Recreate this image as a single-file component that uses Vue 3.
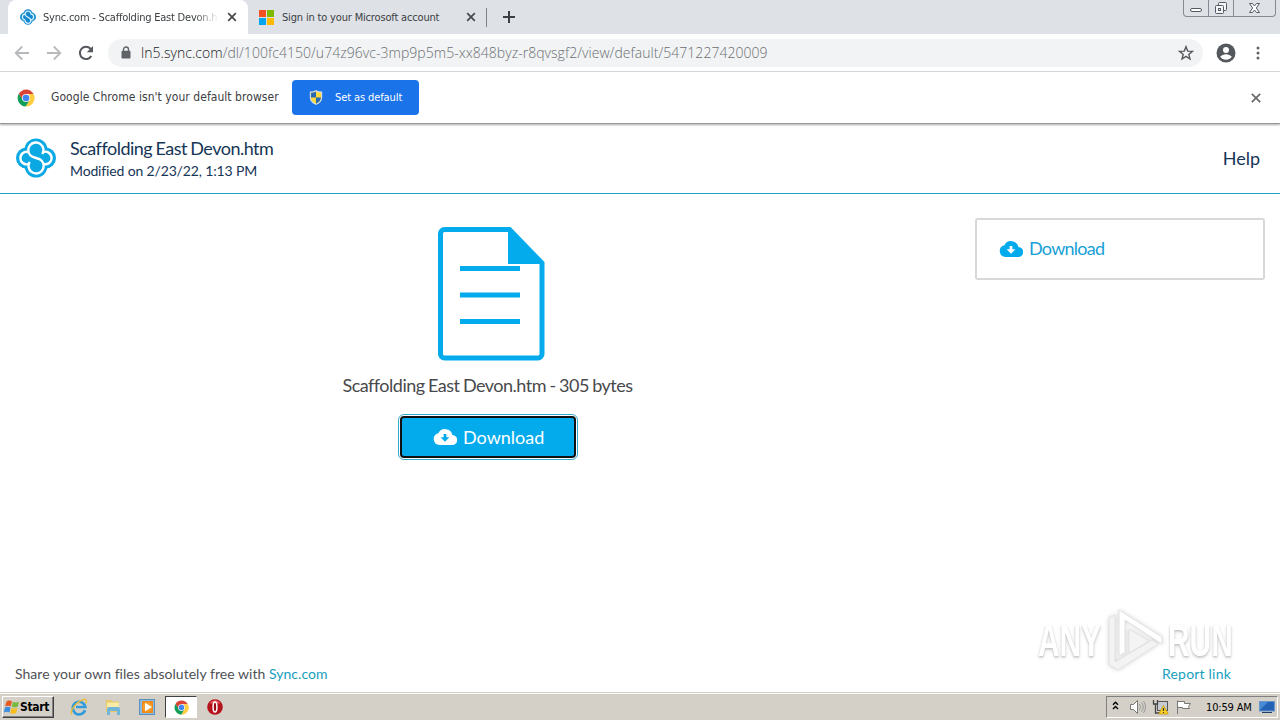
<template>
  <div class="screen">
    <header class="tab-strip">
      <div class="tab active">
        <svg class="favicon" viewBox="0 0 40 40">
          <g fill="#1689cf">
            <circle cx="20" cy="11.5" r="11" />
            <circle cx="20" cy="28.5" r="11" />
            <circle cx="11" cy="20" r="11" />
            <circle cx="29" cy="20" r="11" />
          </g>
          <g fill="none" stroke="#d9f2ff" stroke-width="3">
            <path d="M27 13a7 7 0 1 0-11 5l8 5a7 7 0 1 1-11 5" />
            <path d="M13 13a7 7 0 1 0 0 14" />
            <path d="M27 13a7 7 0 1 1 0 14" />
          </g>
        </svg>
        <span class="tab-title first">Sync.com - Scaffolding East Devon.h</span>
        <svg class="close" viewBox="0 0 10 10"><path d="M1.2 1.2l7.6 7.6M8.8 1.2L1.2 8.8" /></svg>
      </div>
      <div class="tab">
        <svg class="favicon ms" viewBox="0 0 16 16">
          <path fill="#f25022" d="M0 0h7.5v7.5H0z" />
          <path fill="#7fba00" d="M8.5 0H16v7.5H8.5z" />
          <path fill="#00a4ef" d="M0 8.5h7.5V16H0z" />
          <path fill="#ffb900" d="M8.5 8.5H16V16H8.5z" />
        </svg>
        <span class="tab-title second">Sign in to your Microsoft account</span>
        <svg class="close" viewBox="0 0 10 10"><path d="M1.2 1.2l7.6 7.6M8.8 1.2L1.2 8.8" /></svg>
      </div>
      <span class="tab-divider"></span>
      <svg class="new-tab" viewBox="0 0 12 12"><path d="M6 0v12M0 6h12" /></svg>
      <div class="window-buttons">
        <span><svg width="14" height="15"><rect x="1.5" y="8.5" width="11" height="3" rx="1.5" fill="#fff" stroke="#555b66" /></svg></span>
        <span>
          <svg width="14" height="15" fill="#f4f5f7" stroke="#555b66">
            <rect x="4.5" y="2.5" width="8" height="8" rx="1" />
            <rect x="1.5" y="5.5" width="8" height="8" rx="1" />
            <rect x="4.5" y="8.5" width="2" height="2" />
          </svg>
        </span>
        <span class="wide">
          <svg width="13" height="15"><path d="M1.5 3.5h3l2 2.5 2-2.5h3L8.3 8l3.2 4.5h-3l-2-2.5-2 2.5h-3L4.7 8z" fill="#fff" stroke="#555b66" /></svg>
        </span>
      </div>
    </header>

    <div class="toolbar">
      <svg class="nav" viewBox="0 0 16 16"><path d="M15 8H2M8.2 1.5L1.7 8l6.5 6.5" /></svg>
      <svg class="nav" viewBox="0 0 16 16"><path d="M1 8h13M7.8 1.5L14.3 8l-6.5 6.5" /></svg>
      <svg class="nav reload" viewBox="0 0 16 16">
        <path d="M13.3 11A6.1 6.1 0 1 1 12.5 3.8L14 5.5" />
        <path d="M15 1v6.2H8.8z" class="solid" />
      </svg>
      <div class="address">
        <svg class="lock" viewBox="0 0 10 13">
          <path d="M2.5 6V3.5a2.5 2.5 0 0 1 5 0V6" fill="none" stroke="#5f6368" stroke-width="1.4" />
          <rect x=".5" y="4.8" width="9" height="7.7" rx="1" fill="#5f6368" />
        </svg>
        <span class="url"><b>ln5.sync.com</b>/dl/100fc4150/u74z96vc-3mp9p5m5-xx848byz-r8qvsgf2/view/default/5471227420009</span>
        <svg class="star" viewBox="0 0 16 16"><path d="M8 1.7l1.7 4.4 4.7.3-3.6 3 1.2 4.6L8 11.4 4 14l1.2-4.6-3.6-3 4.7-.3z" /></svg>
      </div>
      <svg class="avatar" viewBox="0 0 20 20">
        <circle cx="10" cy="10" r="9.5" fill="#54585d" />
        <circle cx="10" cy="7" r="3" fill="#fff" />
        <path d="M4.2 13.8c1.3-1.8 3.6-2.6 5.8-2.6s4.5.8 5.8 2.6c-1.3 1.9-3.5 3-5.8 3s-4.5-1.1-5.8-3z" fill="#fff" />
      </svg>
      <svg class="kebab" viewBox="0 0 4 14"><circle cx="2" cy="2" r="1.5" /><circle cx="2" cy="7" r="1.5" /><circle cx="2" cy="12" r="1.5" /></svg>
    </div>

    <div class="infobar">
      <svg class="chrome" viewBox="0 0 20 20">
        <path fill="#db4437" d="M2 5.2A9.5 9.5 0 0 1 18.4 5.5H10L5.8 12z" />
        <path fill="#ffcd40" d="M18.4 5.5A9.5 9.5 0 0 1 9.6 19.5L14 12l-1-6.5z" />
        <path fill="#0f9d58" d="M2 5.2A9.5 9.5 0 0 0 9.6 19.5L13.5 13H7z" />
        <circle cx="10" cy="10" r="4.5" fill="#f1f1f1" />
        <circle cx="10" cy="10" r="3.6" fill="#4285f4" />
      </svg>
      <span class="info-text">Google Chrome isn't your default browser</span>
      <button class="default-btn">
        <svg viewBox="0 0 14 16">
          <path d="M7 .7C5 2 3 2.2 1 2.2V8c0 3.5 3 6 6 7.3C10 14 13 11.5 13 8V2.2C11 2.2 9 2 7 .7z" fill="#ffd83b" stroke="#d6dfe4" stroke-width="1.2" />
          <path d="M7 1.5C5 2.7 3 2.9 1.7 2.9V8H7zM7 8h5.3c0 3-2.5 5.2-5.3 6.6z" fill="#2868b5" />
        </svg>
        <span>Set as default</span>
      </button>
      <svg class="close info-close" viewBox="0 0 10 10"><path d="M.8.8l8.4 8.4M9.2.8L.8 9.2" /></svg>
    </div>

    <div class="page-header">
      <svg class="logo" viewBox="0 0 40 40">
        <g fill="#0aa9e4">
          <circle cx="20" cy="12" r="11.5" />
          <circle cx="20" cy="28" r="11.5" />
          <circle cx="10.5" cy="20" r="10.5" />
          <circle cx="29.5" cy="20" r="10.5" />
        </g>
        <g fill="none" stroke="#fff" stroke-width="2.4">
          <path d="M26.3 16.2A7.6 7.6 0 1 0 14.3 17.3Q15.8 18.9 20 20T25.7 22.7A7.6 7.6 0 1 1 13.7 23.8" />
          <path d="M12.6 14A6.3 6.3 0 1 0 13.2 25.8" />
          <path d="M27.4 26A6.3 6.3 0 1 0 26.8 14.2" />
        </g>
      </svg>
      <div class="file-meta">
        <div class="file-name">Scaffolding East Devon.htm</div>
        <div class="modified">Modified on 2/23/22, 1:13 PM</div>
      </div>
      <a class="help">Help</a>
    </div>

    <main class="content">
      <section class="preview">
        <svg class="document" viewBox="0 0 108 134">
          <path d="M71 2.5H6.500a4 4 0 0 0-4 4V127a4 4 0 0 0 4 4H100a4 4 0 0 0 4-4V37" fill="none" stroke="#03abed" stroke-width="5" />
          <path d="M70 0h2.5l34 35v2H70zM22 39h60v5H22zM22 65.5h60v5H22zM22 92h60v5H22z" fill="#03abed" />
        </svg>
        <p class="file-size">Scaffolding East Devon.htm - 305 bytes</p>
        <button class="download-btn">
          <svg class="cloud" viewBox="0 0 24 16">
            <path d="M19.4 6A7.5 7.5 0 0 0 5.4 4.2 6 6 0 0 0 6 16h13a5 5 0 0 0 .4-10z" />
            <path class="arrow" d="M10.6 5h2.8v3.3h3L12 12.8 7.6 8.3h3z" />
          </svg>
          <span>Download</span>
        </button>
      </section>
      <aside class="side-card">
        <svg class="cloud" viewBox="0 0 24 16">
          <path d="M19.4 6A7.5 7.5 0 0 0 5.4 4.2 6 6 0 0 0 6 16h13a5 5 0 0 0 .4-10z" />
          <path class="arrow" d="M10.6 5h2.8v3.3h3L12 12.8 7.6 8.3h3z" />
        </svg>
        <span>Download</span>
      </aside>
    </main>

    <footer class="page-footer">
      <span class="share">Share your own files absolutely free with <a>Sync.com</a></span>
      <a class="report">Report link</a>
    </footer>

    <!-- watermark floats over the page -->
    <div class="watermark">
      <span class="any">ANY</span>
      <svg viewBox="0 0 58 66">
        <g fill="#fff" stroke="#dedede" stroke-width="1">
          <path d="M3 10l6-3v47l37-22 6 4L12 62l-9-5z" fill="#f1f1f1" />
          <path d="M13 2l43 27v7L19 12v32l-6 4z" />
          <path d="M23 21l20 12-20 12z" fill="#f3f3f3" />
        </g>
      </svg>
      <span class="run">RUN</span>
    </div>

    <div class="taskbar">
      <div class="start">
        <svg viewBox="0 0 16 16">
          <path d="M2.5 2.5Q5 .7 8 2.3L6.8 7.2Q4 6 1.2 7.5z" fill="#e65a21" />
          <path d="M9 2.8q3 1.5 6 0l-1.3 5q-3 1.5-6-.1z" fill="#79b93d" />
          <path d="M1 8.6q2.8-1.5 5.6-.1l-1.2 5Q2.7 12-.2 13.6z" fill="#3c8dde" />
          <path d="M7.5 9q3 1.6 6 .1l-1.3 5q-3 1.4-6-.2z" fill="#f7bd1d" />
        </svg>
        <span>Start</span>
      </div>
      <div class="quick">
        <svg viewBox="0 0 18 18">
          <path d="M15 12.3A6.3 6.3 0 1 1 15.3 9H6" fill="none" stroke="#329bd9" stroke-width="2.7" />
          <path d="M2 16.5C-1 13 7 3 14 1.5c3-.6 3 2 1.5 4" fill="none" stroke="#e9bc38" stroke-width="1.3" />
        </svg>
      </div>
      <div class="quick">
        <svg viewBox="0 0 18 18">
          <path d="M2 2h5l1 1.5h7V14H2z" fill="#e9c965" />
          <path d="M3 4.5h12v7H3z" fill="#f9eba5" />
          <path d="M3 17v-6q0-2 2-2h9q2 0 2 2v6h-3v-4H6v4z" fill="#71b6d9" />
        </svg>
      </div>
      <div class="quick">
        <svg viewBox="0 0 18 18">
          <rect x="1.5" y="1.5" width="15" height="15" fill="#8abbe2" stroke="#5c91bd" />
          <rect x="4" y="3" width="11" height="12" fill="#f08a19" />
          <circle cx="9.5" cy="9" r="4.8" fill="#f59e2a" />
          <path d="M7 4.7L14 9l-7 4.3z" fill="#fff" />
        </svg>
      </div>
      <div class="quick pressed">
        <svg viewBox="0 0 20 20">
          <path fill="#db4437" d="M2 5.2A9.5 9.5 0 0 1 18.4 5.5H10L5.8 12z" />
          <path fill="#ffcd40" d="M18.4 5.5A9.5 9.5 0 0 1 9.6 19.5L14 12l-1-6.5z" />
          <path fill="#0f9d58" d="M2 5.2A9.5 9.5 0 0 0 9.6 19.5L13.5 13H7z" />
          <circle cx="10" cy="10" r="4.5" fill="#f1f1f1" />
          <circle cx="10" cy="10" r="3.6" fill="#4285f4" />
        </svg>
      </div>
      <div class="quick">
        <svg viewBox="0 0 18 18">
          <circle cx="9" cy="9" r="7.8" fill="#b5121c" />
          <path d="M3.5 5Q9-.5 14.5 5 9 7 3.5 5z" fill="#e65a5e" />
          <ellipse cx="9" cy="9" rx="1.9" ry="5" fill="#9e0914" stroke="#fff" stroke-width="1.5" />
        </svg>
      </div>
      <div class="tray">
        <svg class="chevrons" viewBox="0 0 7 9"><path d="M1 3.8L3.5 1.3 6 3.8M1 8l2.5-2.5L6 8" /></svg>
        <svg width="17" height="16" class="speaker" fill="#fff" stroke="#777">
          <path d="M1.5 5.5h3l4-4v13l-4-4h-3z" />
          <path d="M10.5 5q2 3 0 6M12.5 3.5q3.5 4.5 0 9M14.5 2q4 6 0 12" fill="none" stroke="#999" />
        </svg>
        <svg width="17" height="16" class="network">
          <rect x="5.5" y="2.5" width="10" height="9" fill="#c7ccd3" stroke="#555" />
          <path d="M1.5 1v4h4V1M3.5 5v9h4" fill="none" stroke="#444" stroke-width="1.3" />
          <path d="M11.5 6.5l4.7 8.5H6.8z" fill="#ffd21f" stroke="#bd9000" stroke-width=".7" />
          <path d="M11.5 9v3M11.5 13v1" stroke="#333" stroke-width="1.2" />
        </svg>
        <svg width="17" height="16" class="flag"><path d="M2.5 15V1.5M2.5 2.5h7v2h6l-2 3 1 2h-7v-1h-5" fill="#fff" stroke="#777" /></svg>
        <span class="clock">10:59 AM</span>
        <svg width="16" height="14" class="desktop">
          <rect x=".5" y="1.5" width="15" height="9.5" fill="#2462b5" stroke="#6695cb" />
          <path d="M1 2h8L1 10z" fill="#468bd4" />
          <path d="M3 12.5h10" stroke="#203f69" />
        </svg>
      </div>
    </div>
  </div>
</template>

<script setup>
</script>

<style>
body {
  margin: 0;
}
</style>

<style scoped>
.screen {
  position: relative;
  width: 1280px;
  height: 720px;
  overflow: hidden;
  background: #fff;
  display: flex;
  flex-direction: column;
  font-family: "DejaVu Sans Condensed", "DejaVu Sans", sans-serif;
  font-stretch: condensed;
}

svg {
  display: block;
  flex: none;
}

span,
a {
  white-space: nowrap;
}

button {
  border: 0;
  padding: 0;
  font-family: inherit;
}

.tab-strip {
  height: 34px;
  flex: none;
  display: flex;
  background: #dee1e6;
}

.tab {
  height: 34px;
  box-sizing: border-box;
  display: flex;
  align-items: center;
  width: 238px;
  padding-left: 11px;
  color: #3c4043;
  font-size: 11px;
}

.tab.active {
  width: 240px;
  margin-left: 8px;
  padding-left: 12px;
  background: #fff;
  border-radius: 8px 8px 0 0;
}

.favicon {
  width: 16px;
  height: 16px;
  margin-right: 7px;
}

.favicon.ms {
  width: 15px;
  height: 15px;
  margin-right: 8px;
}

.tab-title {
  overflow: hidden;
}

.first {
  width: 176px;
  margin-right: 8px;
  letter-spacing: -0.22px;
  mask-image: linear-gradient(to right, #000 86%, transparent);
}

.second {
  width: 176px;
  margin-right: 8px;
  letter-spacing: -0.17px;
}

.close {
  width: 10px;
  height: 10px;
  fill: none;
  stroke: #45494d;
  stroke-width: 1.7;
}

.tab-divider {
  width: 1px;
  height: 19px;
  margin-top: 8px;
  background: #808489;
}

.new-tab {
  width: 12px;
  height: 12px;
  margin: 11px 0 0 16px;
  stroke: #3c4043;
  stroke-width: 2;
}

.window-buttons {
  display: flex;
  margin-left: auto;
  margin-right: 4px;
  height: 17px;
  box-sizing: border-box;
  border: 1px solid #858b95;
  border-top: 0;
  border-radius: 0 0 4px 4px;
}

.window-buttons span {
  width: 24px;
  display: flex;
  justify-content: center;
  border-right: 1px solid #858b95;
}

.window-buttons .wide {
  width: 41px;
  border-right: 0;
}

.toolbar {
  height: 37px;
  flex: none;
  display: flex;
  align-items: center;
  border-bottom: 1px solid #d8dadd;
  padding-left: 14px;
}

.nav {
  width: 16px;
  height: 16px;
  margin-right: 16px;
  fill: none;
  stroke: #b7b9bb;
  stroke-width: 1.8;
}

.reload {
  margin-right: 14px;
  stroke: #55595d;
  stroke-width: 2;
}

.solid {
  fill: #55595d;
  stroke: none;
}

.address {
  width: 1095px;
  height: 28px;
  box-sizing: border-box;
  border-radius: 14px;
  background: #f1f3f4;
  display: flex;
  align-items: center;
  padding: 0 9px 0 13px;
}

.lock {
  width: 10px;
  height: 13px;
  margin-right: 10px;
}

.url {
  padding-bottom: 1px;
  color: #6b6f73;
  font-family: "Open Sans", sans-serif;
  font-stretch: normal;
  font-size: 14px;
  font-weight: 300;
  letter-spacing: 0.04px;
}

.url b {
  color: #202124;
  font-weight: 300;
}

.star {
  width: 16px;
  height: 16px;
  margin-left: auto;
  fill: none;
  stroke: #55595d;
  stroke-width: 1.4;
}

.avatar {
  width: 20px;
  height: 20px;
  margin-left: 13px;
}

.kebab {
  width: 4px;
  height: 14px;
  margin-left: 20px;
  fill: #5f6368;
}

.infobar {
  height: 51px;
  flex: none;
  display: flex;
  align-items: center;
  padding: 0 19px 0 17px;
  border-bottom: 1px solid #999;
  box-shadow: 0 1px 2px #aaa;
}

.chrome {
  width: 18px;
  height: 18px;
}

.info-text {
  width: 241px;
  margin-left: 16px;
  padding-bottom: 2px;
  color: #3c4043;
  font-size: 12px;
  letter-spacing: 0.05px;
}

.default-btn {
  width: 127px;
  height: 35px;
  border-radius: 4px;
  background: #1a73e8;
  color: #fff;
  font-size: 11px;
  letter-spacing: -0.1px;
  display: flex;
  align-items: center;
}

.default-btn svg {
  width: 14px;
  height: 15px;
  margin: 0 12px 0 17px;
}

.info-close {
  margin-left: auto;
  stroke: #66696c;
}

.page-header,
.content,
.page-footer {
  font-family: Lato, sans-serif;
  font-stretch: normal;
}

.page-header {
  height: 69px;
  flex: none;
  display: flex;
  align-items: center;
  border-bottom: 1px solid #1fa3c0;
  padding: 0 20px 0 16px;
  color: #153556;
}

.logo {
  width: 40px;
  height: 40px;
  margin-bottom: 2px;
}

.file-meta {
  margin-left: 14px;
}

.file-name {
  font-size: 18px;
  line-height: 24px;
  letter-spacing: -0.5px;
  word-spacing: -0.8px;
}

.modified {
  font-size: 14px;
  line-height: 21px;
  letter-spacing: -0.15px;
}

.help {
  margin-left: auto;
  padding-bottom: 2px;
  font-size: 18px;
}

.content {
  flex: 1;
  display: flex;
  align-items: flex-start;
}

.preview {
  width: 975px;
  display: flex;
  flex-direction: column;
  align-items: center;
  padding-top: 33px;
}

.document {
  width: 108px;
  height: 134px;
  margin-left: 9px;
}

.file-size {
  margin: 12px 0 0;
  font-size: 18px;
  line-height: 24px;
  letter-spacing: -0.5px;
  word-spacing: -0.7px;
  color: #48494b;
  white-space: nowrap;
}

.download-btn {
  width: 176px;
  height: 42px;
  box-sizing: border-box;
  margin: 19px 0 0 1px;
  border: 2px solid #101010;
  border-radius: 4px;
  outline: 1px solid #35a9cb;
  outline-offset: 1px;
  background: #03abed;
  color: #fff;
  font-family: Lato, sans-serif;
  font-size: 18px;
  display: flex;
  align-items: center;
  padding-left: 31px;
}

.cloud {
  width: 24px;
  height: 16px;
  margin-right: 6px;
  fill: currentColor;
}

.cloud .arrow {
  fill: #03abed;
}

.side-card {
  width: 290px;
  height: 62px;
  box-sizing: border-box;
  margin-top: 24px;
  border: 2px solid #d8d8d8;
  border-radius: 3px;
  display: flex;
  align-items: center;
  padding-left: 22px;
  color: #179fd7;
  font-size: 18px;
  letter-spacing: -0.75px;
}

.side-card span {
  padding-bottom: 2px;
}

.side-card .cloud {
  fill: #03abed;
}

.side-card .arrow {
  fill: #fff;
}

.page-footer {
  height: 38px;
  flex: none;
  box-sizing: border-box;
  display: flex;
  justify-content: space-between;
  align-items: center;
  padding: 0 49px 2px 15px;
  font-size: 14px;
  letter-spacing: 0.04px;
  color: #505255;
}

.page-footer a {
  color: #16a0bd;
}

.page-footer .report {
  letter-spacing: 0.2px;
}

.watermark {
  position: absolute;
  left: 1038px;
  top: 607px;
  height: 68px;
  display: flex;
  align-items: center;
  color: #fff;
  font-family: "Liberation Sans", sans-serif;
  font-stretch: normal;
  font-size: 44px;
  font-weight: 700;
  text-shadow: 0 1px 2px #bbb, 0 2px 4px #ccc;
  opacity: 0.85;
}

.watermark svg {
  width: 58px;
  height: 66px;
  margin-left: 4px;
  filter: drop-shadow(0 0 2px #ccc);
}

.watermark span {
  width: 64px;
  transform: scaleX(0.68);
  transform-origin: left;
}

.watermark .run {
  margin-left: 4px;
}

.taskbar {
  height: 27px;
  flex: none;
  box-sizing: border-box;
  display: flex;
  align-items: center;
  background: #d4d0c8;
  border-top: 1px solid #fff;
  box-shadow: 0 -1px 0 #d4d0c8;
  color: #000;
}

.start {
  width: 52px;
  height: 22px;
  box-sizing: border-box;
  margin: 0 9px 0 2px;
  border: 1px solid;
  border-color: #fff #404040 #404040 #fff;
  box-shadow: inset -1px -1px 0 #808080;
  display: flex;
  align-items: center;
  padding-left: 1px;
  font-size: 12px;
  font-weight: 700;
  letter-spacing: -0.3px;
}

.start svg {
  width: 16px;
  height: 16px;
}

.quick {
  width: 32px;
  height: 22px;
  box-sizing: border-box;
  margin-right: 2px;
  display: flex;
  justify-content: center;
  align-items: center;
}

.quick svg {
  width: 18px;
  height: 18px;
}

.quick.pressed {
  background: #fff;
  border: 1px solid;
  border-color: #404040 #fff #fff #404040;
}

.quick.pressed svg {
  width: 15px;
  height: 15px;
}

.tray {
  width: 172px;
  height: 22px;
  box-sizing: border-box;
  margin: 0 2px 0 auto;
  border: 1px solid;
  border-color: #808080 #fff #fff #808080;
  display: flex;
  align-items: center;
}

.chevrons {
  width: 7px;
  height: 9px;
  margin: 0 0 3px 5px;
  fill: none;
  stroke: #000;
  stroke-width: 1.4;
}

.speaker {
  margin-left: 10px;
}

.network {
  margin-left: 6px;
}

.flag {
  margin-left: 6px;
}

.clock {
  width: 46px;
  margin-left: 14px;
  font-size: 11px;
  letter-spacing: -0.15px;
}

.desktop {
  margin-left: 7px;
}
</style>
